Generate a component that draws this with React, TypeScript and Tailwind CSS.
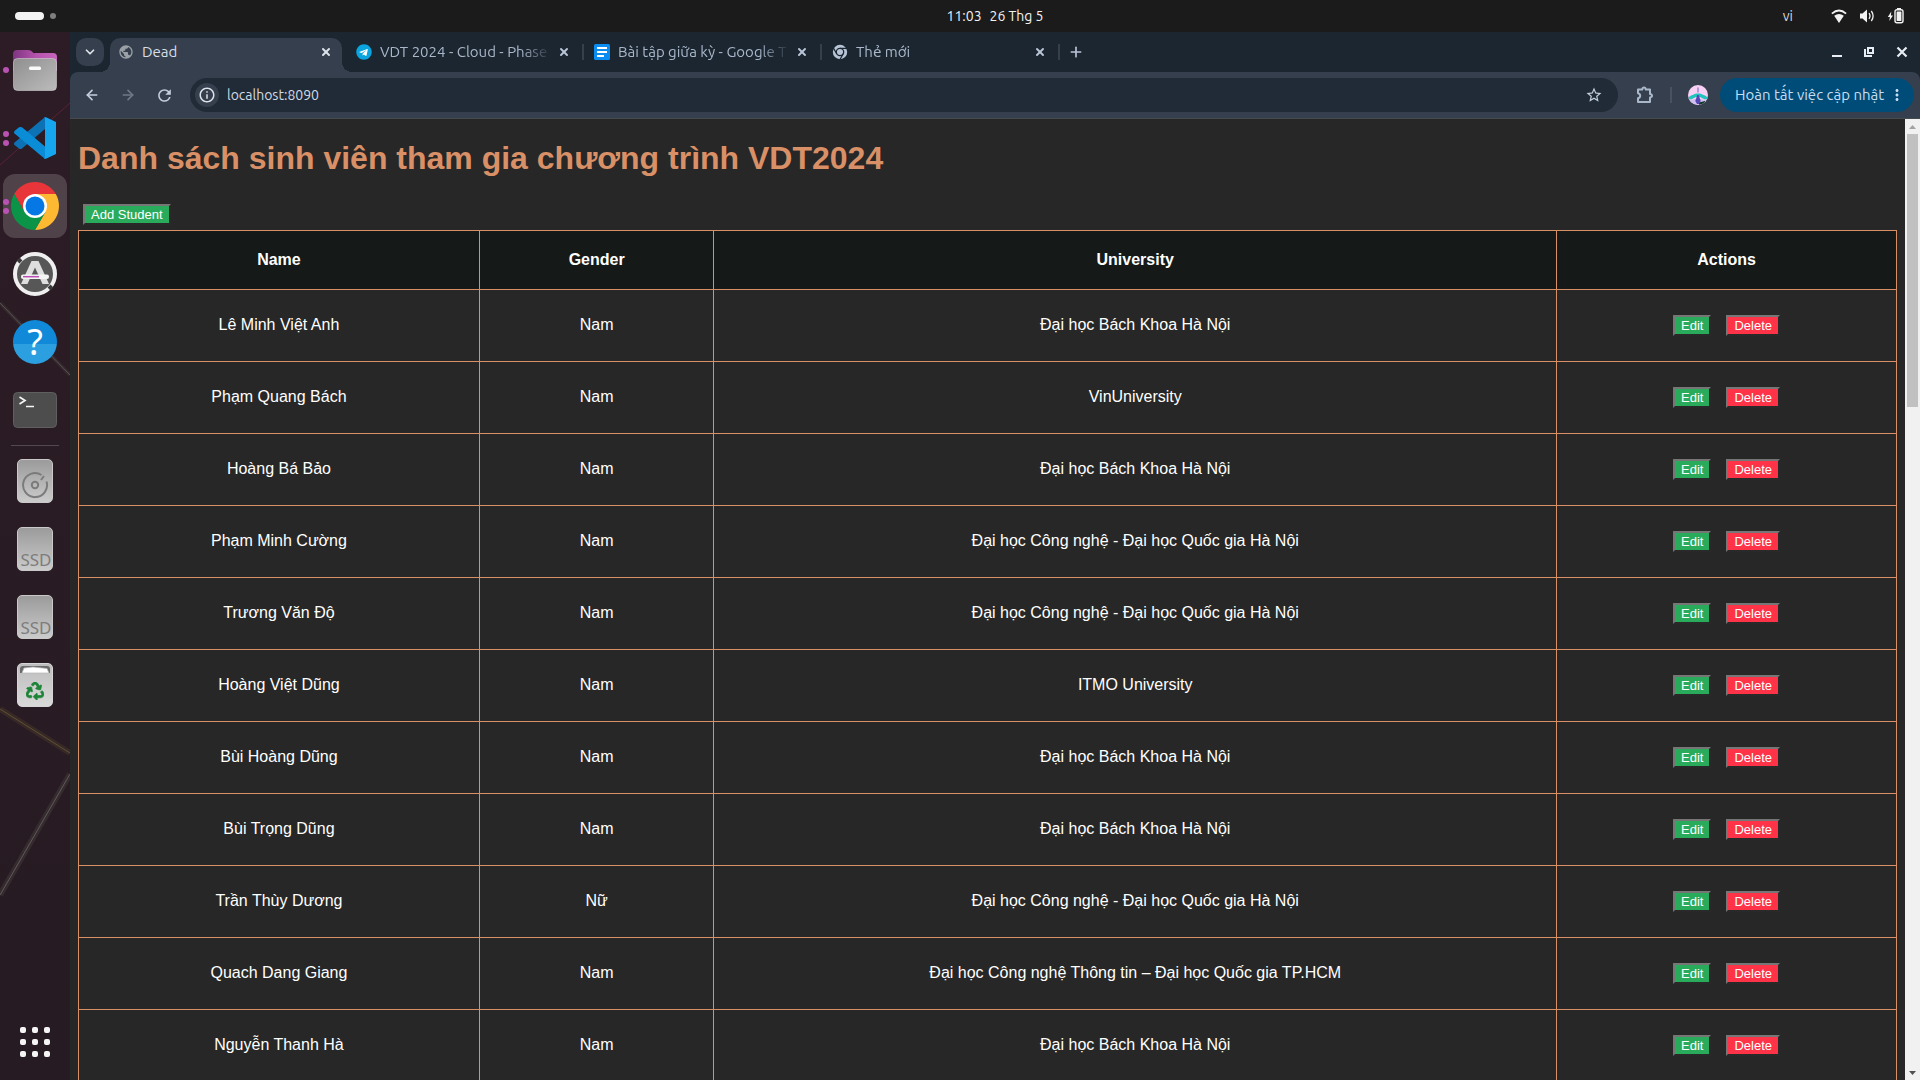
import type { ReactNode } from "react";
import { ArrowLeft, ArrowRight, ChevronDown, Plus, X } from "lucide-react";
import { FaRecycle, FaTelegram } from "react-icons/fa";
import { MdInfoOutline, MdMoreVert, MdPublic, MdRefresh, MdStarOutline } from "react-icons/md";

type Student = { name: string; gender: string; university: string };

const HUST = "Đại học Bách Khoa Hà Nội";
const UET = "Đại học Công nghệ - Đại học Quốc gia Hà Nội";

const students: Student[] = [
  { name: "Lê Minh Việt Anh", gender: "Nam", university: HUST },
  { name: "Phạm Quang Bách", gender: "Nam", university: "VinUniversity" },
  { name: "Hoàng Bá Bảo", gender: "Nam", university: HUST },
  { name: "Phạm Minh Cường", gender: "Nam", university: UET },
  { name: "Trương Văn Độ", gender: "Nam", university: UET },
  { name: "Hoàng Việt Dũng", gender: "Nam", university: "ITMO University" },
  { name: "Bùi Hoàng Dũng", gender: "Nam", university: HUST },
  { name: "Bùi Trọng Dũng", gender: "Nam", university: HUST },
  { name: "Trần Thùy Dương", gender: "Nữ", university: UET },
  { name: "Quach Dang Giang", gender: "Nam", university: "Đại học Công nghệ Thông tin – Đại học Quốc gia TP.HCM" },
  { name: "Nguyễn Thanh Hà", gender: "Nam", university: HUST },
];

/* ---------- System top bar ---------- */

function TopBar() {
  return (
    <header className="grid h-8 shrink-0 grid-cols-[70px_1fr] bg-[#1b1b1b] text-[#f2f2f2]">
      <button aria-label="Activities" className="flex items-center gap-1.5 pl-[15px]">
        <span className="h-2 w-[29px] rounded-full bg-[#f2f2f2]" />
        <span className="size-1.5 rounded-full bg-[#7f7f7f]" />
      </button>
      <div className="grid grid-cols-[1fr_auto_1fr] items-center">
        <span />
        <time className="flex gap-2 text-[14px] leading-5">
          <span>11:03</span>
          <span>26 Thg 5</span>
        </time>
        <div className="flex items-center justify-end pr-4">
          <span className="mr-[38px] text-[14px] text-[#d8d8d8]">vi</span>
          <svg viewBox="0 0 16 16" className="mr-3 h-4 w-4" fill="#f2f2f2">
            <path d="M8 15 3.2 7.8Q8 4 12.800 7.800Z" />
            <path d="M.9 5.600Q8-.6 15.100 5.600" fill="none" stroke="#f2f2f2" strokeWidth="1.800" />
          </svg>
          <svg viewBox="0 0 16 16" className="mr-3 h-4 w-4" fill="#f2f2f2">
            <path d="M1 5.500h2.500L8 1.500v13L3.500 10.500H1z" />
            <path d="M10 5.200q2 2.800 0 5.600M12.300 3q3.600 5 0 10" fill="none" stroke="#f2f2f2" strokeWidth="1.300" />
          </svg>
          <svg viewBox="0 0 17 16" className="h-4 w-[17px]" fill="#f2f2f2">
            <path d="M4.300 3.500.8 9h2.100L2.300 13 6 7.600H3.900z" />
            <rect x="8" y="1.700" width="8" height="13" rx="2" fill="none" stroke="#f2f2f2" strokeWidth="1.400" />
            <rect x="9.600" y="3.400" width="4.800" height="9.700" rx=".6" />
            <path d="M10 0h4v2h-4z" />
          </svg>
        </div>
      </div>
    </header>
  );
}

/* ---------- Dock ---------- */

function FilesIcon() {
  return (
    <svg viewBox="0 0 44 42" className="h-[42px] w-11">
      <defs>
        <linearGradient id="files-back" x2="1" y2="0">
          <stop stopColor="#7e3580" />
          <stop offset=".5" stopColor="#b452ac" />
          <stop offset="1" stopColor="#c866bd" />
        </linearGradient>
        <linearGradient id="files-front" x2="1" y2="1">
          <stop stopColor="#8f8f8f" />
          <stop offset="1" stopColor="#bcbcbc" />
        </linearGradient>
      </defs>
      <path d="M0 5q0-4 4-4h11q3 0 4.500 2T22 4h18q4 0 4 4v14H0z" fill="url(#files-back)" />
      <rect x=".5" y="9.500" width="43" height="32" rx="4" fill="url(#files-front)" stroke="#cfcfcf" strokeOpacity=".6" />
      <rect x="16" y="17.500" width="12" height="3.500" rx="1.500" fill="#fafafa" />
    </svg>
  );
}

function CodeIcon() {
  return (
    <svg viewBox="0 0 42 42" className="size-[42px]">
      <path d="M31 0v12L8 31.500q-1.500 1-3 0L.5 28q-1-1 0-2.500z" fill="#0c71b5" />
      <path d="M.5 14 5 10.300q1.500-.8 3 0L31 29.500V42L.5 16.500q-1-1.200 0-2.500z" fill="#0a8cd6" />
      <path d="M30 .6Q31 0 32 .3L42 5v32l-10 4.700q-1 .3-2-.3 1 0 1-1.400V2Q31 .6 30 .6z" fill="#16a6f0" />
    </svg>
  );
}

function ChromeIcon() {
  return (
    <svg viewBox="0 0 48 48" className="size-12">
      <path d="M3.220 12A24 24 0 0 1 44.780 12H24L13.610 30z" fill="#e8353a" />
      <path d="M44.780 12A24 24 0 0 1 24 48L34.390 30 24 12z" fill="#fdb931" />
      <path d="M24 48A24 24 0 0 1 3.220 12L13.610 30H34.390z" fill="#0b9447" />
      <circle cx="24" cy="24" r="12" fill="#fff" />
      <circle cx="24" cy="24" r="9.500" fill="#0578e5" />
    </svg>
  );
}

function SoftwareIcon() {
  return (
    <svg viewBox="0 0 44 44" className="size-11">
      <circle cx="22" cy="22" r="20" fill="#575757" stroke="#efefef" strokeWidth="4" />
      <path d="m5 10 3-3M36 37l3-3" stroke="#3a3a3a" strokeWidth="4" />
      <path d="M18.500 9h7L36 32h-6.500L22 15.500 14.500 32H8z" fill="#dedede" />
      <rect x="8" y="22.500" width="28" height="4.500" rx="2" fill="#f3f3f3" />
      <path d="M10 24.700h16" stroke="#b84fb4" strokeWidth="1.500" />
    </svg>
  );
}

function HelpIcon() {
  return (
    <span className="flex size-11 items-center justify-center rounded-full bg-linear-to-b from-[#1089d8] from-55% to-[#2b9fe0] to-55% font-['Noto_Sans'] text-[36px] leading-none text-white">
      ?
    </span>
  );
}

function TerminalIcon() {
  return (
    <svg viewBox="0 0 44 36" className="h-9 w-11">
      <rect x=".5" y=".5" width="43" height="35" rx="4" fill="#4d4d4d" stroke="#5f5f5f" />
      <path d="m6.500 5 5.500 3.500L6.500 12M13 14.500h8" fill="none" stroke="#f5f5f5" strokeWidth="1.700" />
    </svg>
  );
}

function Drive({ children }: { children: ReactNode }) {
  return (
    <span className="flex h-11 w-9 items-end justify-center overflow-hidden rounded-[5px] border border-[#c9c9c9] bg-linear-to-b from-[#9b9b9b] to-[#cbcbcb] text-[#7d7d7d]">
      {children}
    </span>
  );
}

function DiskIcon() {
  return (
    <Drive>
      <svg viewBox="0 0 28 28" className="mb-[3px] size-7" fill="none" stroke="#7b7b7b" strokeWidth="2">
        <path d="M20.500 4A12 12 0 1 0 25.500 10.500M20 9l3-4" />
        <circle cx="14" cy="14" r="3.200" />
      </svg>
    </Drive>
  );
}

function SsdIcon() {
  return (
    <Drive>
      <span className="ml-0.5 font-['Noto_Sans'] text-[17px] leading-5">SSD</span>
    </Drive>
  );
}

function TrashIcon() {
  return (
    <span className="flex h-11 w-9 flex-col items-center rounded-[5px] border border-[#d6d6d6] bg-linear-to-b from-[#bdbdbd] to-[#d9d9d9]">
      <svg viewBox="0 0 30 10" className="mt-px h-2.5 w-[30px]">
        <path d="M0 8V4q0-3 3-3h24q3 0 3 3v4z" fill="#6a6a6a" />
        <path d="M2 8 4 3l9-1 14 1.500L29 8z" fill="#fff" stroke="#b5b5b5" strokeWidth=".7" />
      </svg>
      <FaRecycle className="mt-[7px] size-[18px] text-[#1b8436]" stroke="currentColor" strokeWidth={20} />
    </span>
  );
}

function DockItem({ label, windows = 0, active = false, children }: { label: string; windows?: number; active?: boolean; children: ReactNode }) {
  return (
    <button
      aria-label={label}
      className={`relative flex size-16 items-center justify-center rounded-xl ${active ? "bg-[#4f4349]" : ""}`}
    >
      <span className="absolute inset-y-0 left-0 flex flex-col justify-center gap-[3px]">
        {Array.from({ length: windows }, (_, i) => (
          <span key={i} className="size-1.5 rounded-full bg-[#b953b3]" />
        ))}
      </span>
      {children}
    </button>
  );
}

function Dock() {
  return (
    <nav aria-label="Dock" className="relative flex w-[70px] shrink-0 flex-col items-center bg-linear-to-b from-[#2d1c25] to-[#261b22] pt-1.5 pb-1.5">
      <svg viewBox="0 0 70 1048" preserveAspectRatio="xMidYMin slice" className="pointer-events-none absolute inset-0 h-full w-full">
        <path d="M0 133 70 71" stroke="#5c2237" strokeWidth="1" />
        <path d="M0 271 70 343" stroke="#47403f" strokeWidth="4" opacity=".35" />
        <path d="M0 271 70 343" stroke="#565452" strokeWidth="1" />
        <path d="M0 677 70 721" stroke="#4b3a2c" strokeWidth="6" opacity=".45" />
        <path d="M0 677 70 721" stroke="#5e5230" strokeWidth="1" />
        <path d="M70 742 0 863" stroke="#47403f" strokeWidth="6" opacity=".45" />
        <path d="M70 742 0 863" stroke="#5d5c5a" strokeWidth="1" />
      </svg>
      <div className="flex flex-col gap-1">
        <DockItem label="Files" windows={1}><FilesIcon /></DockItem>
        <DockItem label="Visual Studio Code" windows={2}><CodeIcon /></DockItem>
        <DockItem label="Google Chrome" windows={2} active><ChromeIcon /></DockItem>
        <DockItem label="Software"><SoftwareIcon /></DockItem>
        <DockItem label="Help"><HelpIcon /></DockItem>
        <DockItem label="Terminal"><TerminalIcon /></DockItem>
      </div>
      <hr className="mt-[3px] w-12 border-t border-[#54494e]" />
      <div className="mt-[3px] flex flex-col gap-1">
        <DockItem label="Disk"><DiskIcon /></DockItem>
        <DockItem label="SSD volume 1"><SsdIcon /></DockItem>
        <DockItem label="SSD volume 2"><SsdIcon /></DockItem>
        <DockItem label="Trash"><TrashIcon /></DockItem>
      </div>
      <div className="mt-auto">
        <DockItem label="Show applications">
          <span className="grid grid-cols-3 gap-1.5">
            {Array.from({ length: 9 }, (_, i) => (
              <span key={i} className="size-1.5 rounded-[2px] bg-[#f5f5f5]" />
            ))}
          </span>
        </DockItem>
      </div>
    </nav>
  );
}

/* ---------- Browser chrome ---------- */

function MonoChromeIcon() {
  return (
    <svg viewBox="0 0 16 16" className="size-4 shrink-0">
      <circle cx="8" cy="8" r="7.200" fill="#b9c5d6" />
      <circle cx="8" cy="8" r="3.700" fill="none" stroke="#1b2631" strokeWidth="1.300" />
      <path d="M8 4.300h6.800M4.800 9.900 1.400 4M11.200 9.900 7.800 15.700" stroke="#1b2631" strokeWidth="1.200" />
    </svg>
  );
}

function PuzzleIcon() {
  return (
    <svg viewBox="0 0 18 18" className="size-[18px]" fill="none" stroke="currentColor" strokeWidth="2" strokeLinejoin="round">
      <path d="M2 3.500h4.200q.3-2 1.800-2t1.800 2H14V8q2 .3 2 1.700t-2 1.700V16H2v-3.800q2.200-.5 2.200-2.400T2 7.300z" />
    </svg>
  );
}

function Tab({ title, icon, active = false }: { title: string; icon: ReactNode; active?: boolean }) {
  if (active) {
    return (
      <div className="relative flex h-[34px] w-[232px] items-center rounded-t-[10px] bg-[#353f4d] pr-2 pb-1.5 pl-2">
        <span className="absolute bottom-0 -left-2.5 size-2.5 bg-[radial-gradient(circle_at_0_0,transparent_10px,#353f4d_10px)]" />
        <span className="absolute -right-2.5 bottom-0 size-2.5 bg-[radial-gradient(circle_at_100%_0,transparent_10px,#353f4d_10px)]" />
        {icon}
        <span className="ml-2 grow text-[15px] leading-5 text-[#d9dee6]">{title}</span>
        <button aria-label={`Close ${title}`} className="flex size-4 items-center justify-center text-[#dde3ea]">
          <X className="size-3" strokeWidth={4} />
        </button>
      </div>
    );
  }
  return (
    <div className="flex h-7 w-[238px] items-center">
      <div className="flex min-w-0 grow items-center pr-2.5 pl-2.5">
        {icon}
        <span className="ml-2 w-[172px] mask-r-from-82% text-[15px] leading-5 whitespace-nowrap text-[#a9b7c9]">{title}</span>
        <button aria-label={`Close ${title}`} className="ml-auto flex size-4 items-center justify-center text-[#b9c5d6]">
          <X className="size-3" strokeWidth={4} />
        </button>
      </div>
      <span className="h-4 w-0.5 bg-[#36404c]" />
    </div>
  );
}

function TabStrip() {
  return (
    <div className="flex h-10 shrink-0 items-start bg-[#1b2631] pt-1.5 pl-1.5">
      <button aria-label="Search tabs" className="mr-1.5 flex size-7 items-center justify-center rounded-[10px] bg-[#353f4d] text-[#dde3ea]">
        <ChevronDown className="size-3.5" strokeWidth={3} />
      </button>
      <Tab active title="Dead" icon={<MdPublic className="size-4 text-[#9aa0a6]" />} />
      <div className="ml-1 flex">
        <Tab
          title="VDT 2024 - Cloud - Phase"
          icon={
            <span className="flex size-4 shrink-0 items-center justify-center rounded-full bg-[radial-gradient(white_55%,transparent_60%)]">
              <FaTelegram className="size-4 text-[#0aa5de]" />
            </span>
          }
        />
        <Tab
          title="Bài tập giữa kỳ - Google T"
          icon={
            <svg viewBox="0 0 16 16" className="size-4 shrink-0">
              <rect width="16" height="16" rx="1.500" fill="#0a8cf0" />
              <path d="M3 4h10M3 8h10M3 12h7" stroke="#fff" strokeWidth="2" />
            </svg>
          }
        />
        <Tab title="Thẻ mới" icon={<MonoChromeIcon />} />
      </div>
      <button aria-label="New tab" className="ml-0.5 flex size-7 items-center justify-center text-[#b9c5d6]">
        <Plus className="size-4" strokeWidth={2.5} />
      </button>
      <div className="ml-auto flex h-7 items-center gap-[22px] pr-3 text-[#e8edf3]">
        <button aria-label="Minimize" className="size-2.5 self-center border-b-2 border-current" />
        <button aria-label="Restore">
          <svg viewBox="0 0 10 10" className="size-2.5">
            <path d="M4 1h5v5H4zM1 2v7h7" fill="none" stroke="currentColor" strokeWidth="2" />
          </svg>
        </button>
        <button aria-label="Close window">
          <svg viewBox="0 0 12 12" className="size-3">
            <path d="m1.500 1.500 9 9m0-9-9 9" fill="none" stroke="currentColor" strokeWidth="2.200" />
          </svg>
        </button>
      </div>
    </div>
  );
}

function Avatar() {
  return (
    <svg viewBox="0 0 20 20" className="size-5">
      <clipPath id="avatar-clip">
        <circle cx="10" cy="10" r="10" />
      </clipPath>
      <g clipPath="url(#avatar-clip)">
        <path d="M0 0h20v20H0z" fill="#f8d0f4" />
        <path d="M0 13.500 2 11l6-2.500h4l6 2.500 2 2.500-3 1-5-2.500H8l-5 2.500z" fill="#21c3bd" />
        <path d="M0 15.500l7-1.500h6l7 2v4H0z" fill="#d4bdf0" />
        <path d="M11 17.500l6-1.500v4h-6z" fill="#0e3b26" />
        <path d="M10 2.500v5" stroke="#8a6fd0" strokeWidth="1.200" />
        <path d="M9.300 10h1.400l2 6-1.700 3H9l-1.700-3z" fill="#5546b4" />
      </g>
    </svg>
  );
}

function Toolbar() {
  return (
    <div className="shrink-0 bg-[#1b2631]">
      <div className="flex h-[47px] items-center rounded-t-[8px] border-b border-[#474b50] bg-[#353f4d] pr-1.5 pl-3 text-[#c3cede]">
        <button aria-label="Back" className="flex w-5 justify-center">
          <ArrowLeft className="size-4" strokeWidth={2.5} />
        </button>
        <button aria-label="Forward" className="ml-4 flex w-5 justify-center text-[#6f7a88]">
          <ArrowRight className="size-4" strokeWidth={2.5} />
        </button>
        <button aria-label="Reload" className="ml-4 flex w-5 justify-center">
          <MdRefresh className="size-[19px]" />
        </button>
        <div className="ml-4 flex h-[34px] grow items-center rounded-full bg-[#202b37] pr-[15px] pl-[5px]">
          <button aria-label="Site information" className="flex size-6 items-center justify-center rounded-full bg-[#353f4d] text-[#dde3ea]">
            <MdInfoOutline className="size-[18px]" />
          </button>
          <input aria-label="Address" defaultValue="localhost:8090" className="ml-2 min-w-0 grow bg-transparent text-[14px] leading-5 text-[#d3dae3] outline-none" />
          <button aria-label="Bookmark this page">
            <MdStarOutline className="size-[18px]" />
          </button>
        </div>
        <button aria-label="Extensions" className="ml-[18px] text-[#a9b7c9]">
          <PuzzleIcon />
        </button>
        <span className="ml-4 h-4 w-0.5 bg-[#485362]" />
        <button aria-label="Profile" className="ml-4">
          <Avatar />
        </button>
        <button className="ml-3 flex h-[34px] w-[194px] items-center justify-between rounded-full bg-[#004c78] pr-2 pl-[15px] text-[15px] whitespace-nowrap text-[#c6def2]">
          Hoàn tất việc cập nhật
          <MdMoreVert className="size-[18px]" />
        </button>
      </div>
    </div>
  );
}

/* ---------- Page ---------- */

const bevel = "border-2 border-t-[#767676] border-r-[#292929] border-b-[#292929] border-l-[#767676] px-1.5 py-px text-[13px] leading-[15px] text-white";

function GreenButton({ children }: { children: ReactNode }) {
  return <button className={`${bevel} bg-[#2aab5b]`}>{children}</button>;
}

function RedButton({ children }: { children: ReactNode }) {
  return <button className={`${bevel} bg-[#ff3348]`}>{children}</button>;
}

function StudentPage() {
  return (
    <main className="min-w-0 grow overflow-hidden bg-[#272727] px-2 pt-[21px] font-['Liberation_Sans',sans-serif] text-base text-white">
      <h1 className="mb-[27px] text-[32px] leading-[37px] font-bold text-[#d99067]">
        Danh sách sinh viên tham gia chương trình VDT2024
      </h1>
      <div className="mb-[5px] flex px-[5px]">
        <GreenButton>Add Student</GreenButton>
      </div>
      <table className="w-full table-fixed border-collapse text-center leading-[18px]">
        <colgroup>
          <col className="w-[22.05%]" />
          <col className="w-[12.9%]" />
          <col className="w-[46.35%]" />
          <col className="w-[18.7%]" />
        </colgroup>
        <thead>
          <tr className="h-[59px] bg-[#151917]">
            {["Name", "Gender", "University", "Actions"].map((heading) => (
              <th key={heading} scope="col" className="border border-[#d99067] font-bold">
                {heading}
              </th>
            ))}
          </tr>
        </thead>
        <tbody>
          {students.map((student) => (
            <tr key={student.name} className="h-[72px]">
              <td className="border border-[#d99067] pb-0.5">{student.name}</td>
              <td className="border border-[#d99067] pb-0.5">{student.gender}</td>
              <td className="border border-[#d99067] pb-0.5">{student.university}</td>
              <td className="border border-[#d99067]">
                <div className="flex justify-center gap-[15px]">
                  <GreenButton>Edit</GreenButton>
                  <RedButton>Delete</RedButton>
                </div>
              </td>
            </tr>
          ))}
        </tbody>
      </table>
    </main>
  );
}

function PageScrollbar() {
  return (
    <div aria-hidden="true" className="flex w-[15px] shrink-0 flex-col bg-[#f1f1f1]">
      <svg viewBox="0 0 15 15" className="size-[15px]" fill="#a3a3a3">
        <path d="M4 10h7L7.500 6z" />
      </svg>
      <div className="grow px-0.5">
        <div className="h-[29.3%] bg-[#c1c1c1]" />
      </div>
      <svg viewBox="0 0 15 15" className="size-[15px]" fill="#505050">
        <path d="M4 6h7l-3.500 4z" />
      </svg>
    </div>
  );
}

export default function App() {
  return (
    <div className="flex h-screen flex-col overflow-hidden bg-[#272727] font-['Ubuntu','Noto_Sans',sans-serif]">
      <TopBar />
      <div className="flex min-h-0 grow">
        <Dock />
        <section aria-label="Browser" className="flex min-w-0 grow flex-col">
          <TabStrip />
          <Toolbar />
          <div className="flex min-h-0 grow">
            <StudentPage />
            <PageScrollbar />
          </div>
        </section>
      </div>
    </div>
  );
}
